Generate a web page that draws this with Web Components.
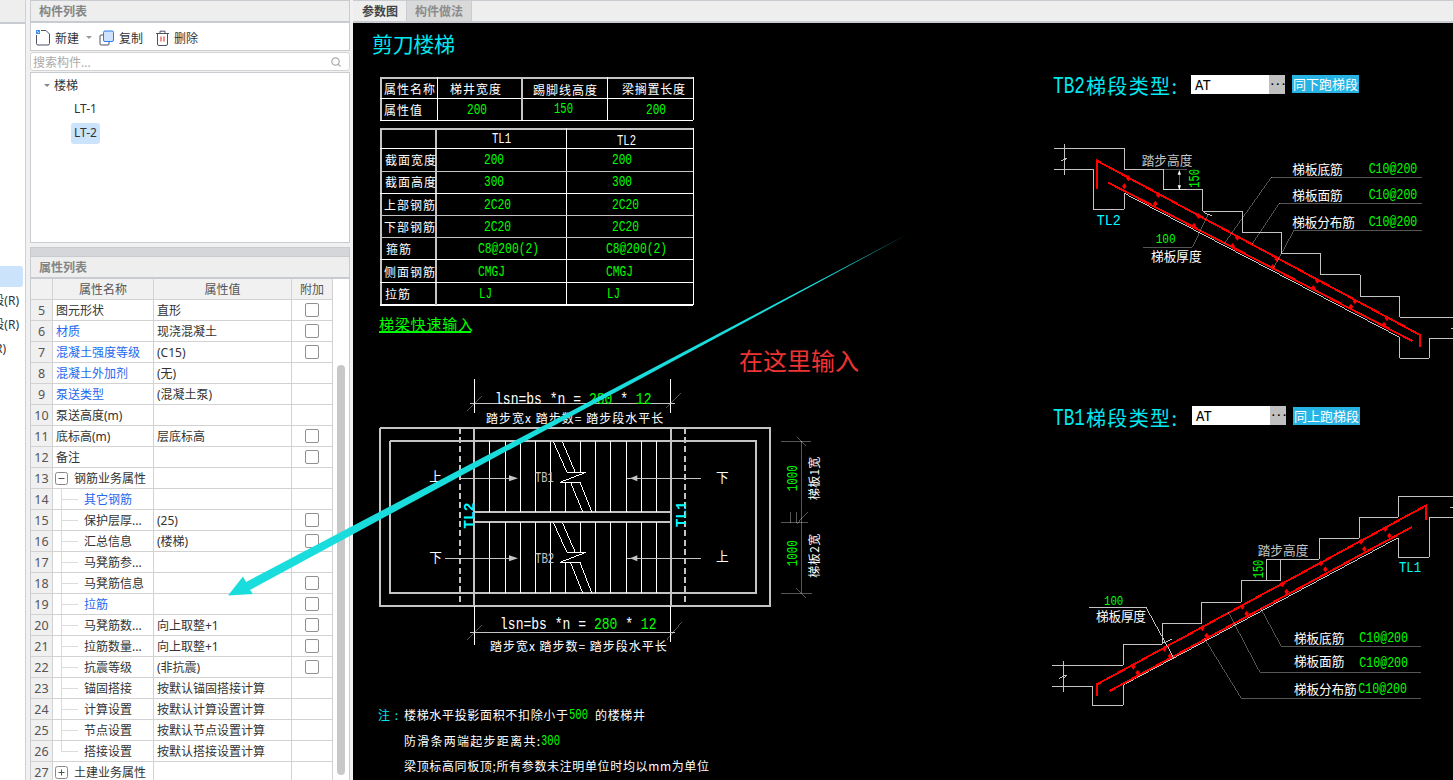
<!DOCTYPE html>
<html lang="zh">
<head>
<meta charset="utf-8">
<title>剪刀楼梯</title>
<style>
	html, body { margin: 0; height: 100%; overflow: hidden; background: #f1f1f1; }
	body { font: 12px "Noto Sans", "Noto Sans CJK SC", sans-serif; color: #333; }
</style>
</head>
<body>
<app-shell>
	<nav-rail slot="rail"></nav-rail>
	<side-panel slot="side">
		<panel-header>构件列表</panel-header>
		<comp-toolbar></comp-toolbar>
		<search-box placeholder="搜索构件..."></search-box>
		<comp-tree></comp-tree>
		<panel-splitter></panel-splitter>
		<panel-header>属性列表</panel-header>
		<prop-table></prop-table>
	</side-panel>
	<cad-view slot="main"></cad-view>
	<arrow-overlay slot="overlay"></arrow-overlay>
</app-shell>

<script>
/**
 * @class AppShell
 * @description Page frame: rail, property side panel, drawing, and the annotation layer on top.
 */
class AppShell extends HTMLElement {
	constructor() {
		super();
		this.attachShadow({mode:'open'});
		this.shadowRoot.innerHTML = `
			<style>
				:host { display: flex; height: 780px; width: 1453px; position: relative; overflow: hidden; }
				#main { flex: 1; min-width: 0; margin-left: 3px; }
				#side { width: 320px; margin-left: 4px; }
				#main, #side { display: flex; }
			</style>
			<slot name="rail"></slot>
			<div id="side"><slot name="side"></slot></div>
			<div id="main"><slot name="main"></slot></div>
			<slot name="overlay"></slot>
		`;
	}
}

class NavRail extends HTMLElement {
	constructor() {
		super();
		this.attachShadow({mode:'open'});
		this.shadowRoot.innerHTML = `
			<style>
				:host { display: block; width: 26px; box-sizing: border-box; background: #fff; border-right: 1px solid #d0d0d0; overflow: hidden; flex: none; }
				#head { height: 22px; background: #eee; border-bottom: 2px solid #c8ccd0; margin-bottom: 242px; }
				.item { height: 21px; width: 23px; display: flex; justify-content: flex-end; align-items: center; white-space: nowrap; overflow: hidden; margin-bottom: 3px; border-radius: 0 3px 3px 0; box-sizing: border-box; padding-bottom: 2px; }
				.on { background: #cce4fb; }
			</style>
			<div id="head"></div>
			<div class="item on"></div>
			<div class="item" style="padding-right:4px">楼梯段(R)</div>
			<div class="item" style="padding-right:4px">楼梯段(R)</div>
			<div class="item" style="padding-right:17px">楼梯(R)</div>
		`;
	}
}

class SidePanel extends HTMLElement {
	constructor() {
		super();
		this.attachShadow({mode:'open'});
		this.shadowRoot.innerHTML = `
			<style>
				:host { display: flex; flex-direction: column; width: 320px; height: 780px; overflow: hidden; }
			</style>
			<slot></slot>
		`;
	}
}

class PanelHeader extends HTMLElement {
	constructor() {
		super();
		this.attachShadow({mode:'open'});
		this.shadowRoot.innerHTML = `
			<style>
				:host { display: flex; align-items: center; flex: none; height: 23px; box-sizing: border-box; padding-left: 8px; background: #eee; border: 1px solid #c8ccd0; border-width: 1px 1px 2px; color: #858585; font-weight: 700; font-size: 12px; }
			</style>
			<slot></slot>
		`;
	}
}

class CompToolbar extends HTMLElement {
	constructor() {
		super();
		this.attachShadow({mode:'open'});
		this.shadowRoot.innerHTML = `
			<style>
				:host { display: flex; align-items: center; flex: none; height: 28px; box-sizing: border-box; padding: 2px 0 0 4px; background: #fff; border: 1px solid #c8ccd0; border-width: 0 1px 1px; color: #333; }
				svg { flex: none; display: block; }
				span { margin-left: 4px; }
				span:last-child { margin-left: 5px; }
				.caret { width: 0; height: 0; margin: 0 7px; border: 3px solid transparent; border-top-color: #999; border-bottom: 0; }
				.gap { margin-left: 13px; }
			</style>
			<svg width="16" height="17" viewBox="0 0 16 17" fill="none">
				<path d="M1.5 6v8.5a1.5 1.5 0 0 0 1.5 1.5h10a1.5 1.5 0 0 0 1.5-1.5V5L11 1.5H6" stroke="#4a5266"/>
				<path d="M1 1h4v4H1z" fill="#3f8ff0"/><path d="M2 2h1v1H2zM3 3h1v1H3z" fill="#cfe4fb"/>
			</svg>
			<span>新建</span>
			<i class="caret"></i>
			<svg width="16" height="16" viewBox="0 0 16 16" fill="none">
				<path d="M4 5H2a1 1 0 0 0-1 1v8a1 1 0 0 0 1 1h7a1 1 0 0 0 1-1v-2" stroke="#4a5266"/>
				<rect x="4.5" y="1" width="10" height="10.5" rx="1.5" fill="#cfe2fb" stroke="#2a7de8"/>
			</svg>
			<span>复制</span>
			<svg class="gap" width="13" height="16" viewBox="0 0 13 16" fill="none">
				<path d="M0 3.5h13M4 3V1.2h5V3M1.5 4v10a1.5 1.5 0 0 0 1.5 1.5h7a1.5 1.5 0 0 0 1.5-1.5V4" stroke="#4a5266"/>
				<path d="M5 6.500v5M8 6.500v5" stroke="#e02020"/>
			</svg>
			<span>删除</span>
		`;
	}
}

class SearchBox extends HTMLElement {
	constructor() {
		super();
		this.attachShadow({mode:'open'});
		this.shadowRoot.innerHTML = `
			<style>
				:host { display: flex; align-items: center; justify-content: space-between; flex: none; height: 19px; box-sizing: border-box; margin-top: 1px; padding: 0 8px 0 2px; background: #fff; border: 1px solid #d4d4d4; border-radius: 3px; color: #aaa; }
				svg { display: block; }
			</style>
			<span>${this.getAttribute('placeholder')}</span>
			<svg width="10" height="10" viewBox="0 0 10 10" fill="none" stroke="#aaa" stroke-width="1.200"><circle cx="4.500" cy="4.500" r="3.700"/><path d="M7.200 7.200L9.500 9.500"/></svg>
		`;
	}
}

class CompTree extends HTMLElement {
	constructor() {
		super();
		this.attachShadow({mode:'open'});
		this.shadowRoot.innerHTML = `
			<style>
				:host { display: block; flex: none; height: 171px; box-sizing: border-box; margin-top: 1px; background: #fff; border: 1px solid #c8ccd0; }
				.row { display: flex; align-items: center; height: 24px; }
				.root { padding-left: 13px; }
				.caret { width: 0; height: 0; margin-right: 4px; border: 3px solid transparent; border-top-color: #888; border-bottom: 0; }
				.leaf { margin-left: 40px; padding: 0 3px; height: 21px; line-height: 19px; border-radius: 3px; }
				.on { background: #cce4fb; }
			</style>
			<div class="row root"><i class="caret"></i>楼梯</div>
			<div class="row"><span class="leaf">LT-1</span></div>
			<div class="row"><span class="leaf on">LT-2</span></div>
		`;
	}
}

class PanelSplitter extends HTMLElement {
	constructor() {
		super();
		this.attachShadow({mode:'open'});
		this.shadowRoot.innerHTML = `
			<style>
				:host { display: block; flex: none; height: 9px; margin-top: 4px; background: #d4d6da; border: 1px solid #c8ccd0; border-width: 1px 1px 0; box-sizing: border-box; }
			</style>
		`;
	}
}

/**
 * @class PropTable
 * @description Numbered property grid. Rows: [number, name, value, checkbox, kind]
 * kind: b = blue name, g = collapsible group, c = child of the group above.
 */
class PropTable extends HTMLElement {
	rows = [
		[5, '图元形状', '直形', 1],
		[6, '材质', '现浇混凝土', 1, 'b'],
		[7, '混凝土强度等级', '(C15)', 1, 'b'],
		[8, '混凝土外加剂', '(无)', 0, 'b'],
		[9, '泵送类型', '(混凝土泵)', 0, 'b'],
		[10, '泵送高度(m)', '', 0],
		[11, '底标高(m)', '层底标高', 1],
		[12, '备注', '', 1],
		[13, '钢筋业务属性', '', 0, 'g-'],
		[14, '其它钢筋', '', 0, 'cb'],
		[15, '保护层厚...', '(25)', 1, 'c'],
		[16, '汇总信息', '(楼梯)', 1, 'c'],
		[17, '马凳筋参...', '', 0, 'c'],
		[18, '马凳筋信息', '', 1, 'c'],
		[19, '拉筋', '', 1, 'cb'],
		[20, '马凳筋数...', '向上取整+1', 1, 'c'],
		[21, '拉筋数量...', '向上取整+1', 1, 'c'],
		[22, '抗震等级', '(非抗震)', 1, 'c'],
		[23, '锚固搭接', '按默认锚固搭接计算', 0, 'c'],
		[24, '计算设置', '按默认计算设置计算', 0, 'c'],
		[25, '节点设置', '按默认节点设置计算', 0, 'c'],
		[26, '搭接设置', '按默认搭接设置计算', 0, 'l'],
		[27, '土建业务属性', '', 0, 'g+']
	];

	constructor() {
		super();
		this.attachShadow({mode:'open'});
		const body = this.rows.map(([num, name, value, check, kind = '']) => {
			let nameCell = `<div class="c name ${kind.includes('b') ? 'blue' : ''}">${name}</div>`;
			if (kind[0] === 'g') {
				const sym = kind[1] === '-' ? 'M3 6h6' : 'M3 6h6M6 3v6';
				nameCell = `<div class="c name group"><svg width="13" height="13" viewBox="0 0 13 13" fill="none"><rect x=".5" y=".5" width="12" height="12" rx="2" stroke="#888"/><path d="${sym}" stroke="#555" transform="translate(.5 .5)"/></svg>${name}</div>`;
			} else if (kind[0] === 'c' || kind[0] === 'l') {
				nameCell = `<div class="c name ${kind[0] === 'l' ? 'last' : 'child'} ${kind.includes('b') ? 'blue' : ''}">${name}</div>`;
			}
			return `<div class="row">
				<div class="c num">${num}</div>
				${nameCell}
				<div class="c val">${value}</div>
				<div class="c chk">${check ? '<i></i>' : ''}</div>
			</div>`;
		}).join('');

		this.shadowRoot.innerHTML = `
			<style>
				:host { display: flex; flex: 1; min-height: 0; background: #fff; border: 1px solid #c8ccd0; border-width: 0 1px; }
				#grid { width: 302px; flex: none; }
				.row { display: grid; grid-template-columns: 22px 101px 138px 41px; height: 21px; }
				.c { display: flex; align-items: center; min-width: 0; box-sizing: border-box; border: 1px solid #d2d2d2; border-width: 0 1px 1px 0; white-space: nowrap; overflow: hidden; color: #333; }
				.head .c { justify-content: center; background: #f1f1f1; color: #555; }
				.num { justify-content: center; background: #f0f0f0; color: #555; font-size: 12.500px; }
				.name { padding-left: 3px; }
				.val { padding-left: 3px; }
				.chk { justify-content: center; }
				.chk i { display: block; width: 14px; height: 14px; box-sizing: border-box; border: 1px solid #909090; border-radius: 2px; }
				.blue { color: #2468ee; }
				.group { padding-left: 2px; gap: 6px; }
				.child { padding-left: 31px; background: linear-gradient(#dcdcdc,#dcdcdc) 8px 0/1px 100% no-repeat, linear-gradient(#dcdcdc,#dcdcdc) 8px 50%/17px 1px no-repeat; }
				.last { padding-left: 31px; background: linear-gradient(#dcdcdc,#dcdcdc) 8px 0/1px 50% no-repeat, linear-gradient(#dcdcdc,#dcdcdc) 8px 50%/17px 1px no-repeat; }
				#bar { flex: 1; padding: 86px 4px 0; }
				#bar i { display: block; width: 8px; height: 410px; background: #c8c8c8; border-radius: 4px; }
			</style>
			<div id="grid">
				<div class="row head"><div class="c"></div><div class="c">属性名称</div><div class="c">属性值</div><div class="c">附加</div></div>
				${body}
			</div>
			<div id="bar"><i></i></div>
		`;
	}
}

class CadCombo extends HTMLElement {
	constructor() {
		super();
		this.attachShadow({mode:'open'});
		this.shadowRoot.innerHTML = `
			<style>
				:host { position: absolute; display: flex; height: 19px; width: 94px; background: #fff; color: #000; font: 14px "Liberation Mono", monospace; }
				span { flex: 1; padding: 2px 0 0 4px; line-height: 19px; letter-spacing: -1px; }
				b { width: 16px; background: #c0c0c0; color: #000; font: 700 11px/14px "Liberation Mono", monospace; letter-spacing: -1px; text-align: center; }
			</style>
			<span><slot></slot></span><b>...</b>
		`;
	}
}

class CadTag extends HTMLElement {
	constructor() {
		super();
		this.attachShadow({mode:'open'});
		this.shadowRoot.innerHTML = `
			<style>
				:host { position: absolute; height: 18px; width: 67px; background: #27b4e4; color: #fff; font: 13px/18px "Noto Sans CJK SC", sans-serif; text-align: center; white-space: nowrap; overflow: hidden; }
			</style>
			<slot></slot>
		`;
	}
}

/* --- drawing helpers, all plain svg strings --- */
const WHITE = '#fff', GREEN = '#00ff00', CYAN = '#00e8f0', GRAY = '#c4c4c4', RED = '#ff0000';
const CJK = '"Noto Sans CJK SC", sans-serif';
const MONO = '"Liberation Mono", monospace';

function pl(points, color = WHITE, w = 1, extra = '') {
	return `<polyline points="${points}" fill="none" stroke="${color}" stroke-width="${w}" shape-rendering="crispEdges" ${extra}/>`;
}

/**
 * @param {number} x - left edge (or centre for o.r / o.a)
 * @param {number} y - vertical centre
 * @param {string} s - the text, may hold tspans
 * @param {object} o - c colour, fs size, w textLength, f family, r rotation, a anchor, b weight
 */
function tx(x, y, s, {c = WHITE, fs = 12, w, f = CJK, r, a, b} = {}) {
	const attrs = [
		`x="${x}"`, `y="${y}"`, `fill="${c}"`, `font-size="${fs}"`, `font-family='${f}'`, 'dominant-baseline="central"'
	];
	// cad latin is narrow and tall, so squeeze the glyphs rather than the gaps
	if (w) attrs.push(`textLength="${w}"`, `lengthAdjust="${f === MONO ? 'spacingAndGlyphs' : 'spacing'}"`);
	if (f === MONO) attrs.push(`dy="${fs * .07}"`);
	if (a) attrs.push(`text-anchor="${a}"`);
	if (b) attrs.push(`font-weight="${b}"`);
	if (r) attrs.push(`transform="rotate(${r} ${x} ${y})"`);
	return `<text ${attrs.join(' ')}>${s}</text>`;
}

const green = (x, y, s, w, fs = 15) => tx(x, y, s, {c: GREEN, fs, w, f: MONO});

function paramTables() {
	let out = '';
	// first table
	out += pl('380,78 693,78', GRAY, 2) + pl('381,77 381,120', GRAY, 2) + pl('380,120 693,120') + pl('693,77 693,120');
	out += pl('380,98 693,98') + pl('437,77 437,120') + pl('522,77 522,120', GRAY, 2) + pl('607,77 607,120');
	out += tx(384, 88, '属性名称', {w: 51}) + tx(450, 88, '梯井宽度', {w: 51}) + tx(533, 89, '踢脚线高度', {w: 64}) + tx(622, 88, '梁搁置长度', {w: 63});
	out += tx(384, 109, '属性值', {w: 38});
	out += green(467, 109, '200', 20) + green(554, 108, '150', 19) + green(646, 109, '200', 20);

	// second table
	out += pl('380,129 693,129', GRAY, 2) + pl('381,128 381,305', GRAY, 2) + pl('380,305 693,305', WHITE, 2) + pl('693,128 693,305');
	out += pl('436,128 436,305', GRAY, 2) + pl('566,128 566,305');
	[[148, WHITE], [171, GRAY], [193, WHITE], [215, GRAY], [237, GRAY], [259, WHITE], [282, WHITE]]
		.forEach(([y, c]) => { out += pl(`380,${y} 693,${y}`, c); });
	out += tx(492, 138, 'TL1', {f: MONO, fs: 15, w: 19}) + tx(617, 140, 'TL2', {f: MONO, fs: 15, w: 19});
	[
		['截面宽度', 159, 385, 51, '200', 20, 484],
		['截面高度', 181, 385, 51, '300', 20, 484],
		['上部钢筋', 204, 384, 51, '2C20', 27, 484],
		['下部钢筋', 226, 384, 51, '2C20', 27, 484],
		['箍筋', 248, 386, 25, 'C8@200(2)', 61, 478],
		['侧面钢筋', 271, 384, 51, 'CMGJ', 27, 478],
		['拉筋', 293, 385, 25, 'LJ', 13, 479]
	].forEach(([name, y, nx, nw, val, vw, vx]) => {
		out += tx(nx, y, name, {w: nw}) + green(vx, y, val, vw) + green(vx + 128, y, val, vw);
	});
	out += tx(379, 323, '梯梁快速输入', {c: GREEN, fs: 15, w: 94}) + pl('379,332 471,332', GREEN, 2);
	return out;
}

/* stair plan, coordinates read from a 3x crop with origin 360,370 */
function stairPlan() {
	let out = '<g transform="translate(360 370) scale(.33333)">';
	const g = (p, w = 6) => pl(p, GRAY, w);
	const v = (x, y1, y2, c = WHITE) => pl(`${x},${y1} ${x},${y2}`, c, 3);

	out += g('60,173 1230,173 1230,707 60,707 60,173') + g('90,212 1188,212 1188,668 90,668 90,212');
	out += g('342,173 342,707') + g('933,173 933,707') + g('342,425 933,425') + g('342,455 933,455');
	out += pl('300,173 300,707', GRAY, 6, 'stroke-dasharray="18 10"') + pl('975,173 975,707', GRAY, 6, 'stroke-dasharray="18 10"');

	// treads
	[388, 436, 482, 527, 572, 706, 752, 800, 845, 890].forEach(x => { out += v(x, 212, 425) + v(x, 455, 668); });
	out += v(616, 340, 425) + v(616, 580, 668) + v(661, 212, 305) + v(661, 455, 545);

	// break lines
	[0, 240].forEach(d => {
		const top = d ? 458 : 215, end = d ? 668 : 425;
		out += pl(`580,${top} 620,${305 + d}`, WHITE, 3);
		out += pl(`607,${top} 645,${305 + d}`, WHITE, 3);
		out += pl(`620,${307 + d} 678,${307 + d} 600,${337 + d} 660,${337 + d} 695,${end}`, WHITE, 3);
		out += pl(`632,${338 + d} 668,${end}`, WHITE, 3);
	});

	// run arrows
	[[325, 300], [565, 255]].forEach(([y, x0]) => {
		out += pl(`${x0},${y} 450,${y}`, GRAY, 3) + pl(`800,${y} 1022,${y}`, GRAY, 3);
		out += `<path d="M447 ${y - 9}L474 ${y}L447 ${y + 9}Z" fill="${GRAY}"/><path d="M832 ${y - 9}L810 ${y}L832 ${y + 9}Z" fill="${GRAY}"/>`;
	});
	out += tx(208, 318, '上', {fs: 38}) + tx(1068, 320, '下', {fs: 38}) + tx(208, 560, '下', {fs: 38}) + tx(1068, 556, '上', {fs: 38});
	out += tx(525, 320, 'TB1', {fs: 42, f: MONO, c: GRAY, w: 56}) + tx(525, 565, 'TB2', {fs: 42, f: MONO, c: GRAY, w: 58});
	out += tx(327, 437, 'TL2', {fs: 46, f: MONO, c: '#00ffff', r: -90, a: 'middle', b: 700, w: 78});
	out += tx(962, 433, 'TL1', {fs: 46, f: MONO, c: '#00ffff', r: -90, a: 'middle', b: 700, w: 78});

	// dimensions above and below, one monospaced line with the numbers in green
	const formula = (x, y) => `<g transform="translate(${x} 0) scale(.783 1)">${tx(0, y, `lsn=bs *n = <tspan fill="${GREEN}">280</tspan> * <tspan fill="${GREEN}">12</tspan>`, {fs: 50, f: MONO})}</g>`;
	out += v(343, 28, 130) + v(931, 28, 130) + pl('330,102 945,102', GRAY, 3) + pl('322,122 365,80') + pl('918,115 962,70');
	out += formula(405, 85);
	out += tx(378, 143, '踏步宽x 踏步数= 踏步段水平长', {fs: 36, w: 532});
	out += v(343, 707, 825) + v(933, 707, 815) + pl('330,787 945,787', GRAY, 3) + pl('322,808 365,767') + pl('920,810 965,757');
	out += formula(420, 760);
	out += tx(390, 827, '踏步宽x 踏步数= 踏步段水平长', {fs: 36, w: 530});

	// right side dimensions
	out += pl('1263,214 1352,214') + pl('1263,458 1345,458') + pl('1263,670 1355,670') + pl('1325,214 1325,670');
	out += pl('1293,425 1293,458') + pl('1310,425 1310,458') + pl('1310,200 1338,228') + pl('1310,655 1338,683') + pl('1310,462 1345,425');
	out += tx(1295, 325, '1000', {fs: 44, f: MONO, c: GREEN, r: -90, a: 'middle', w: 78});
	out += tx(1295, 550, '1000', {fs: 44, f: MONO, c: GREEN, r: -90, a: 'middle', w: 78});
	out += tx(1362, 325, '梯板1宽', {fs: 36, r: -90, a: 'middle', w: 130});
	out += tx(1362, 557, '梯板2宽', {fs: 36, r: -90, a: 'middle', w: 132});
	return out + '</g>';
}

function rebarDots(points) {
	return points.map(([x, y]) => `<path d="M${x} ${y - 9}L${x + 7} ${y}L${x} ${y + 9}L${x - 7} ${y}Z" fill="${RED}"/>`).join('');
}

const lbl = (x, y, s, w, c = WHITE) => tx(x, y, s, {fs: 38, w, c});
const spec = (x, y, s = 'C10@200', w = 146) => tx(x, y, s, {fs: 45, f: MONO, c: GREEN, w});

/* upper flight detail, 3x crop with origin 1040,60 */
function flightTb2() {
	let out = '<g transform="translate(1040 60) scale(.33333)">';
	out += pl('42,265 253,265 253,328 370,328 370,390 488,390 488,454 607,454 607,519 725,519 725,582 842,582 842,645 961,645 961,709 1079,709 1079,772 1239,772', GRAY, 3);
	out += pl('42,328 160,328 160,448 253,448 253,400 1079,832 1079,895 1168,895 1168,835 1239,835', GRAY, 3);
	out += pl('73,252 73,345', GRAY, 3) + pl('62,303 82,293 72,303', GRAY, 3) + pl('1233,806 1239,806', GRAY, 3);
	out += pl('171,388 171,302 1140,825 1140,860', RED, 6) + pl('205,368 1117,843', RED, 6);
	out += rebarDots([[265,355],[355,405],[476,468],[592,533],[710,597],[832,662],[945,724],[1041,775],[253,379],[346,431],[462,497],[578,558],[698,621],[820,684],[933,740],[1032,794]]);
	out += lbl(305, 300, '踏步高度', 152, GRAY);
	out += pl('370,328 440,328') + pl('370,390 440,390') + pl('418,332 418,386');
	out += `<path d="M418 330l-5 14h10zM418 390l-5 -14h10z" fill="${WHITE}"/>`;
	out += tx(461, 355, '150', {fs: 42, f: MONO, c: GREEN, r: -90, a: 'middle', w: 56});
	out += tx(170, 480, 'TL2', {fs: 42, f: MONO, c: '#00ffff', w: 72});
	out += tx(347, 536, '100', {fs: 40, f: MONO, c: GREEN, w: 60});
	out += pl('310,562 457,562 505,462') + pl('492,458 516,468', GRAY, 3) + lbl(333, 587, '梯板厚度', 152);
	out += pl('552,552 694,352 1145,352') + pl('637,552 718,430 1145,430') + pl('700,625 762,511 1145,511');
	out += lbl(757, 327, '梯板底筋', 151) + spec(986, 326);
	out += lbl(757, 403, '梯板面筋', 151) + spec(986, 403);
	out += lbl(757, 484, '梯板分布筋', 188) + spec(986, 484);
	return out + '</g>';
}

/* lower flight detail, 3x crop with origin 1040,395 */
function flightTb1() {
	let out = '<g transform="translate(1040 395) scale(.33333)">';
	out += pl('36,811 250,811 250,748 367,748 367,685 485,685 485,622 604,622 604,557 722,557 722,493 838,493 838,430 958,430 958,367 1075,367 1075,304 1239,304', GRAY, 3);
	out += pl('36,874 157,874 157,931 250,931 250,870 1075,428 1075,487 1168,487 1168,367 1239,367', GRAY, 3);
	out += pl('71,798 71,890', GRAY, 3) + pl('58,850 80,840 70,850', GRAY, 3) + pl('1230,339 1239,339', GRAY, 3);
	out += pl('171,902 171,868 1157,332 1157,374', RED, 6) + pl('209,888 1116,396', RED, 6);
	out += rebarDots([[280,815],[373,762],[487,700],[607,635],[727,568],[843,505],[963,440],[1036,402],[293,833],[390,783],[500,722],[620,656],[740,590],[856,523],[973,462],[1048,422]]);
	out += lbl(653, 463, '踏步高度', 152, GRAY);
	out += pl('680,493 722,493', GRAY, 3) + pl('680,557 722,557', GRAY, 3) + pl('680,493 680,557', GRAY, 3);
	out += tx(655, 522, '150', {fs: 42, f: MONO, c: GREEN, r: -90, a: 'middle', w: 56});
	out += tx(1077, 517, 'TL1', {fs: 42, f: MONO, c: '#00ffff', w: 66});
	out += tx(192, 617, '100', {fs: 38, f: MONO, c: GREEN, w: 58});
	out += pl('148,637 318,637 402,790', GRAY, 3) + pl('368,745 395,733', GRAY, 3) + lbl(168, 662, '梯板厚度', 150);
	out += pl('662,640 724,754 1143,754') + pl('565,652 660,832 1143,832') + pl('492,728 604,910 1143,910');
	out += lbl(762, 727, '梯板底筋', 151) + spec(958, 727);
	out += lbl(762, 798, '梯板面筋', 151) + spec(958, 802);
	out += lbl(762, 880, '梯板分布筋', 188) + spec(955, 880);
	return out + '</g>';
}

function notes() {
	let out = tx(378, 714, '注:', {c: CYAN, w: 20});
	out += tx(404, 714, '楼梯水平投影面积不扣除小于', {w: 164}) + green(569, 714, '500', 19) + tx(595, 714, '的楼梯井', {w: 50});
	out += tx(404, 740, '防滑条两端起步距离共:', {w: 136}) + green(541, 740, '300', 19);
	out += tx(404, 765, '梁顶标高同板顶;所有参数未注明单位时均以mm为单位', {w: 305});
	return out;
}

function flightTitle(y, name) {
	return tx(1053, y, name, {c: CYAN, fs: 23, f: MONO, w: 32}) + tx(1086, y, '梯段类型:', {c: CYAN, fs: 20, w: 91});
}

/**
 * @class CadView
 * @description The parameter drawing with its tab strip. The svg uses page coordinates.
 */
class CadView extends HTMLElement {
	constructor() {
		super();
		this.attachShadow({mode:'open'});
		this.shadowRoot.innerHTML = `
			<style>
				:host { display: flex; flex-direction: column; flex: 1; min-width: 0; height: 780px; }
				#tabs { display: flex; flex: none; height: 23px; box-sizing: border-box; background: #eee; border: 1px solid #c8ccd0; border-width: 1px 0 2px; padding-left: 1px; }
				.tab { display: flex; align-items: center; justify-content: center; font-weight: 700; font-size: 12px; color: #444; width: 52px; border-right: 1px solid #c8ccd0; }
				.off { width: 64px; background: #d9d9d9; color: #8c8c8c; }
				#sheet { position: relative; flex: 1; background: #000; overflow: hidden; }
				svg { display: block; }
			</style>
			<div id="tabs"><div class="tab">参数图</div><div class="tab off">构件做法</div></div>
			<div id="sheet">
				<svg width="1100" height="757" viewBox="353 23 1100 757">
					${tx(372, 43, '剪刀楼梯', {c: CYAN, fs: 21, w: 83})}
					${paramTables()}
					${stairPlan()}
					${flightTitle(85, 'TB2')}
					${flightTb2()}
					${flightTitle(417, 'TB1')}
					${flightTb1()}
					${notes()}
				</svg>
				<cad-combo style="left:838px;top:52px">AT</cad-combo>
				<cad-tag style="left:939px;top:52px">同下跑梯段</cad-tag>
				<cad-combo style="left:839px;top:383px">AT</cad-combo>
				<cad-tag style="left:940px;top:384px">同上跑梯段</cad-tag>
			</div>
		`;
	}
}

/**
 * @class ArrowOverlay
 * @description Screenshot annotation drawn on top of everything: long cyan arrow and its red note.
 */
class ArrowOverlay extends HTMLElement {
	constructor() {
		super();
		this.attachShadow({mode:'open'});
		this.shadowRoot.innerHTML = `
			<style>
				:host { position: absolute; left: 0; top: 0; width: 1453px; height: 780px; pointer-events: none; }
				svg { display: block; }
				text { font-family: "Noto Sans CJK SC", sans-serif; }
			</style>
			<svg width="1453" height="780" viewBox="0 0 1453 780">
				<defs>
					<linearGradient id="fade" gradientUnits="userSpaceOnUse" x1="908" y1="234" x2="820" y2="280">
						<stop offset="0" stop-color="#19dcdc" stop-opacity=".7"/>
						<stop offset="1" stop-color="#19dcdc"/>
					</linearGradient>
				</defs>
				<path d="M908 234L246 582L243 576.500L228 595.500L253 594L250 590Z" fill="url(#fade)"/>
				<text x="739" y="370" font-size="24" fill="#ee3333">在这里输入</text>
			</svg>
		`;
	}
}

customElements.define('app-shell', AppShell);
customElements.define('nav-rail', NavRail);
customElements.define('side-panel', SidePanel);
customElements.define('panel-header', PanelHeader);
customElements.define('comp-toolbar', CompToolbar);
customElements.define('search-box', SearchBox);
customElements.define('comp-tree', CompTree);
customElements.define('panel-splitter', PanelSplitter);
customElements.define('prop-table', PropTable);
customElements.define('cad-combo', CadCombo);
customElements.define('cad-tag', CadTag);
customElements.define('cad-view', CadView);
customElements.define('arrow-overlay', ArrowOverlay);
</script>
</body>
</html>
